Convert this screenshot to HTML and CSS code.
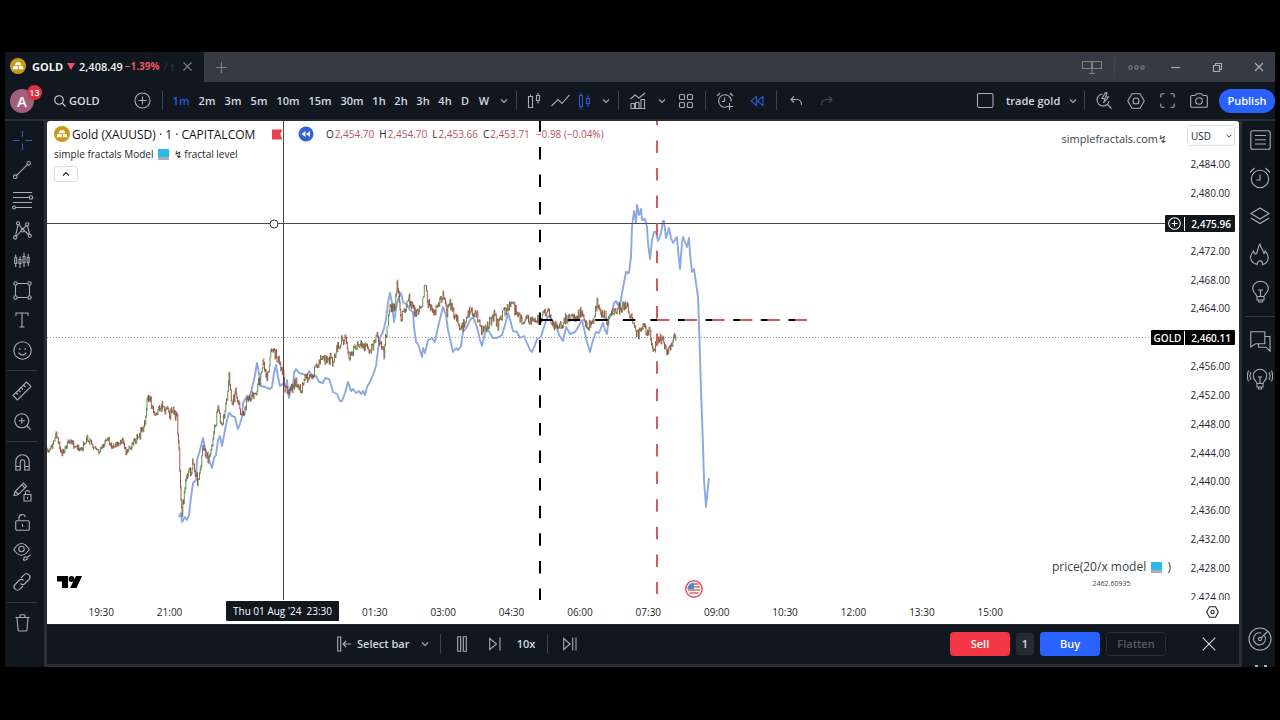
FILE: index.html
```html
<!DOCTYPE html>
<html lang="en">
<head>
<meta charset="utf-8">
<title>GOLD 2,408.49 −1.39%</title>
<link rel="stylesheet" href="styles.css">
</head>
<body>
<svg class="defs" aria-hidden="true">
  <symbol id="chev" viewBox="0 0 10 10"><path d="M2 3.5l3 3 3-3"/></symbol>
  <symbol id="gold" viewBox="0 0 16 16"><circle cx="8" cy="8" r="8" fill="#c99a16" stroke="none"/><path d="M6 4.2h4l1.2 3H4.800zM3.600 8h3.800l1.100 3.200H2.500zM8.800 8h3.700l1.100 3.200H9.200z" fill="#fff" stroke="none"/></symbol>
</svg>
<div class="app">
  <header class="titlebar">
    <div class="tab">
      <svg class="coin"><use href="#gold"/></svg>
      <span class="tab-name">GOLD</span>
      <svg width="8" height="7" viewBox="0 0 8 7"><path d="M0 0h8L4 7z" fill="#f0525e"/></svg>
      <span class="tab-price">2,408.49</span>
      <span class="tab-change">−1.39%</span>
      <span class="tab-fade">/ t</span>
      <button class="ico w16 dim" aria-label="Close tab"><svg width="9" height="9"><path d="M.5.5l8 8M8.500.5l-8 8"/></svg></button>
    </div>
    <button class="ico w34 dim" aria-label="New tab"><svg width="11" height="11"><path d="M5.500 0v11M0 5.500h11"/></svg></button>
    <div class="window-controls">
      <button class="ico w36 dim" aria-label="Layouts"><svg width="20" height="13"><path d="M.5.5h9v7h-9zM10.500.5h9v7h-9zM10 8v4M7 12.500h6"/></svg></button>
      <i class="sep w8"></i>
      <button class="ico w36 dim" aria-label="More"><svg width="17" height="5"><circle cx="2.500" cy="2.500" r="1.700"/><circle cx="8.500" cy="2.500" r="1.700"/><circle cx="14.500" cy="2.500" r="1.700"/></svg></button>
      <button class="ico w42" aria-label="Minimize"><svg width="9" height="3"><path d="M0 1.500h9"/></svg></button>
      <button class="ico w42" aria-label="Restore"><svg width="9" height="9"><path d="M.5 2.500h6v6h-6zM2.500 2.500v-2h6v6h-2"/></svg></button>
      <button class="ico w42" aria-label="Close"><svg width="10" height="10"><path d="M1 1l8 8M9 1l-8 8"/></svg></button>
    </div>
  </header>

  <nav class="toolbar">
    <button class="avatar" aria-label="Account">A<span class="badge">13</span></button>
    <button class="symbol-search"><svg width="12" height="12"><circle cx="5" cy="5" r="4.300"/><path d="M8.200 8.200l3.300 3.300"/></svg>GOLD</button>
    <button class="ico w28" aria-label="Compare"><svg width="17" height="17"><circle cx="8.500" cy="8.500" r="7.500"/><path d="M8.500 4.500v8M4.500 8.500h8"/></svg></button>
    <i class="sep w12"></i>
    <button class="tf w26 on">1m</button><button class="tf w26">2m</button><button class="tf w26">3m</button><button class="tf w26">5m</button><button class="tf w32">10m</button><button class="tf w32">15m</button><button class="tf w32">30m</button><button class="tf w22">1h</button><button class="tf w22">2h</button><button class="tf w22">3h</button><button class="tf w22">4h</button><button class="tf w18">D</button><button class="tf w20">W</button>
    <button class="ico w20" aria-label="More intervals"><svg width="10" height="10"><use href="#chev"/></svg></button>
    <i class="sep w4"></i>
    <button class="ico w32" aria-label="Bars"><svg width="14" height="18"><path d="M1.500 4.500h4v11h-4zM3.500 2.500v2M9.500 3.500h3v5h-3zM11 1v2.500M11 9v2.500"/></svg></button>
    <button class="ico w20" aria-label="Line"><svg width="19" height="13"><path d="M.5 12L7 5.500l4 4L18.500.8"/></svg></button>
    <button class="ico w28 blue" aria-label="Candles"><svg width="13" height="18"><path d="M1.500 3.500h3v11h-3zM3 1v2M3 15v2.500M8.500 6.500h3v5h-3zM10 3.500v3M10 12v3"/></svg></button>
    <button class="ico w16" aria-label="More chart types"><svg width="10" height="10"><use href="#chev"/></svg></button>
    <i class="sep w8"></i>
    <button class="ico w32" aria-label="Indicators"><svg width="16" height="17"><path d="M.5 7L5 3l4 3 6-5M1 16.500v-5h3.500v5M5.500 16.500v-6H9v6M11 16.500v-9h3.500v9M.5 16.500h15"/></svg></button>
    <button class="ico w16" aria-label="Templates"><svg width="10" height="10"><use href="#chev"/></svg></button>
    <button class="ico w32" aria-label="Layout"><svg width="14" height="14"><rect x=".5" y=".5" width="5" height="5" rx="1"/><rect x="8.500" y=".5" width="5" height="5" rx="1"/><rect x=".5" y="8.500" width="5" height="5" rx="1"/><rect x="8.500" y="8.500" width="5" height="5" rx="1"/></svg></button>
    <i class="sep w6"></i>
    <button class="ico w34" aria-label="Alert"><svg width="18" height="18"><path d="M10 15.200A6.300 6.300 0 1 1 15.200 9.500M8.500 5.500v4H6M1 4l3-3M14 1l3 3M13.500 11v7M10 14.500h7"/></svg></button>
    <button class="ico w30 blue" aria-label="Replay"><svg width="14" height="12"><path d="M6.500 1.500v9L1 6zM13 1.500v9L7.500 6z"/></svg></button>
    <i class="sep w8"></i>
    <button class="ico w32" aria-label="Undo"><svg width="12" height="10"><path d="M4 .5l-3 3 3 3M1 3.500h6c3 0 4.500 2 4.500 5.500"/></svg></button>
    <button class="ico w30 faint" aria-label="Redo"><svg width="12" height="10"><path d="M8 .5l3 3-3 3M11 3.500H5C2 3.500.5 5.500.5 9"/></svg></button>
    <div class="toolbar-right">
      <button class="ico w32" aria-label="Select layout"><svg width="17" height="15"><rect x=".5" y=".5" width="15.500" height="14" rx="1.500"/></svg></button>
      <button class="layout-name">trade gold</button>
      <button class="ico w18" aria-label="Manage layouts"><svg width="10" height="10"><use href="#chev"/></svg></button>
      <i class="sep w4"></i>
      <button class="ico w36" aria-label="Quick search"><svg width="16" height="17"><path d="M6.500 2A6 6 0 1 0 13 9M11 12l4.500 4.500M9.500.5L6 6.500h3L7.500 11l5-6h-3L11 .8z"/></svg></button>
      <button class="ico w28" aria-label="Settings"><svg width="18" height="16"><path d="M5 .8h8L17.300 8 13 15.200H5L.7 8z"/><circle cx="9" cy="8" r="3"/></svg></button>
      <button class="ico w34" aria-label="Fullscreen"><svg width="15" height="15"><path d="M.8 4.500V2a1.200 1.200 0 0 1 1.200-1.200h2.500M10.500.8H13A1.200 1.200 0 0 1 14.200 2v2.500M14.200 10.500V13A1.200 1.200 0 0 1 13 14.200h-2.500M4.500 14.200H2A1.200 1.200 0 0 1 .8 13v-2.500"/></svg></button>
      <button class="ico w30" aria-label="Snapshot"><svg width="18" height="15"><path d="M2 2.500h3L6.500.7h5L13 2.500h3A1.300 1.300 0 0 1 17.300 4v9a1.300 1.300 0 0 1-1.300 1.300H2A1.300 1.300 0 0 1 .7 13V4A1.300 1.300 0 0 1 2 2.500z"/><circle cx="9" cy="8" r="3.300"/></svg></button>
      <button class="publish">Publish</button>
    </div>
  </nav>

  <div class="body">
    <aside class="tools">
      <button class="ico blue" aria-label="Cross"><svg width="19" height="19"><path d="M9.500 0v6.500M9.500 12.500V19M0 9.500h6.500M12.500 9.500H19"/></svg></button>
      <button class="ico" aria-label="Trend line"><svg width="18" height="18"><circle cx="2.300" cy="15.700" r="1.800"/><circle cx="15.700" cy="2.300" r="1.800"/><path d="M3.600 14.400L14.400 3.600"/></svg></button>
      <button class="ico" aria-label="Fibonacci"><svg width="21" height="18"><path d="M1 1.500h19M1 6.500h16.500M1 11.500h19M4 16.500h16"/><circle cx="19" cy="6.500" r="1.700"/><circle cx="2" cy="16.500" r="1.500"/></svg></button>
      <button class="ico" aria-label="Patterns"><svg width="19" height="19"><path d="M2.500 15L5 4M6 3.500l3.500 5 4-4M14.500 5l2 8M3.500 15L8 10M11 9.500l4.500 4"/><circle cx="5" cy="2.300" r="1.600"/><circle cx="14.200" cy="3.300" r="1.600"/><circle cx="9.500" cy="9.500" r="1.500"/><circle cx="2.200" cy="16.500" r="1.600"/><circle cx="16.700" cy="14.700" r="1.600"/></svg></button>
      <button class="ico" aria-label="Forecast"><svg width="16" height="16"><path d="M.7 5.500h2v6h-2zM1.700 2.500v3M1.700 12v3M5 7.500h2v4H5zM6 4.500v3M6 12v4M9 4.500h2v6H9zM10 .5v4M10 11v4M13.200 5.500h2v5h-2zM14.200 2v3M14.200 11v3"/></svg></button>
      <button class="ico" aria-label="Shapes"><svg width="19" height="19"><path d="M4.300 2.500h10.400M4.300 16.500h10.400M2.500 4.300v10.400M16.500 4.300v10.400"/><circle cx="2.500" cy="2.500" r="1.700"/><circle cx="16.500" cy="2.500" r="1.700"/><circle cx="2.500" cy="16.500" r="1.700"/><circle cx="16.500" cy="16.500" r="1.700"/></svg></button>
      <button class="ico" aria-label="Text"><svg width="14" height="16"><path d="M1 4V1h12v3M7 1v14M4.500 15h5"/></svg></button>
      <button class="ico" aria-label="Icons"><svg width="19" height="19"><circle cx="9.500" cy="9.500" r="8.700"/><path d="M6.800 7v2M12.200 7v2M5.800 11.500a4 4 0 0 0 7.400 0"/></svg></button>
      <i class="rule"></i>
      <button class="ico" aria-label="Measure"><svg width="20" height="20"><path d="M1 14.500L14.500 1 19 5.500 5.500 19zM4 11.500l2 2M6.500 9l2 2M9 6.500l2 2M11.500 4l2 2"/></svg></button>
      <button class="ico" aria-label="Zoom in"><svg width="17" height="17"><circle cx="7.800" cy="7.800" r="7"/><path d="M7.800 4.800v6M4.800 7.800h6M13 13l3.500 3.500"/></svg></button>
      <i class="rule"></i>
      <button class="ico" aria-label="Magnet"><svg width="15" height="17"><path d="M.8 16V7.500a6.700 6.700 0 0 1 13.400 0V16H9.700V8a2.200 2.200 0 0 0-4.400 0v8zM.8 12.500h4.500M9.700 12.500h4.500"/></svg></button>
      <button class="ico" aria-label="Stay in drawing mode"><svg width="19" height="20"><path d="M1 13.500l1-4L10.500 1l3.200 3.200L5 12.800zM8.800 2.700L12 6M2.500 9.500l3 3M11 12.500h7V19h-7zM12.500 12.500v-2a2 2 0 0 1 4 0M14.500 15v2"/></svg></button>
      <button class="ico" aria-label="Lock"><svg width="15" height="17"><rect x=".7" y="6.700" width="13.600" height="9.600" rx="1.200"/><path d="M4 6.500V4a3.200 3.200 0 0 1 6.300-1M7.500 10v3"/></svg></button>
      <button class="ico" aria-label="Hide drawings"><svg width="19" height="20"><path d="M.8 7.500Q8.500-4.500 16.200 7.500 8.500 19 .8 7.500z"/><circle cx="8.500" cy="7" r="2.700"/><path d="M10.500 18c0-3 2.500-4 3.500-2.500s-1 3-3.500 2.500zM14 15.500l3.500-2.500"/></svg></button>
      <button class="ico" aria-label="Link"><svg width="18" height="18"><path d="M8 5l3-3a3.200 3.200 0 0 1 5 0 3.200 3.200 0 0 1 0 4.500L12 10.500a3.200 3.200 0 0 1-4.500 0M10 13l-3 3a3.200 3.200 0 0 1-5 0 3.200 3.200 0 0 1 0-4.500L6 7.500a3.200 3.200 0 0 1 4.500 0"/></svg></button>
      <i class="rule"></i>
      <button class="ico" aria-label="Delete"><svg width="15" height="18"><path d="M.5 3.500h14M5 3.500v-2A1 1 0 0 1 6 .8h3a1 1 0 0 1 1 .7v2M2 3.500l1 12.300a1.400 1.400 0 0 0 1.400 1.200h6.200a1.400 1.400 0 0 0 1.400-1.200L13 3.500"/></svg></button>
    </aside>

    <main class="center">
      <section class="chart">
        <div class="pane">
          <svg class="plot" viewBox="47 121 1139 479" preserveAspectRatio="none">
            <path class="last-price" d="M47 337.500H1186"/>
            <g class="model">
              <polyline points="179,517 181,513 182,522 185,517 187,520 189,515 191,497 193,483 196,480 197,460 200,450 203,438 205,448 208,457 212,468 214,458 216,455 218,440 220,436 222,446 225,430 227,420 229,413 232,416 235,417 237,426 238,429 240,424 242,417 243,403 247,396 249,400 252,388 255,375 257,363 259,373 261,386 265,387 270,389 272,387 274,373 276,365 278,377 280,386 284,383 286,387 287,380 289,398 291,388 293,386 294,373 296,369 299,373 303,374 307,376 309,371 313,377 316,376 319,382 323,383 325,378 329,379 331,385 333,392 337,394 340,401 342,401 345,393 348,382 351,391 353,389 356,393 359,391 361,394 363,391 365,395 367,387 370,382 373,375 376,366 378,350 380,338 383,332 386,320 388,303 390,293 392,303 394,322 397,303 399,297 401,293 403,302 407,305 410,310 413,312 414,327 416,342 418,344 422,357 423,348 425,353 428,340 432,338 435,342 438,327 441,315 443,307 446,315 448,330 451,343 453,352 456,348 458,350 461,346 463,332 467,327 470,320 473,317 477,327 480,340 482,346 485,333 488,330 493,338 497,338 502,335 505,325 508,313 511,323 513,331 517,332 520,338 524,336 527,343 530,350 532,352 535,345 537,339 541,337 543,330 547,318 549,316 553,322 557,328 559,335 563,341 566,327 570,334 575,332 578,327 582,320 585,333 587,342 590,352 593,340 596,332 599,333 603,323 605,330 607,334 609,317 612,313 614,303 616,301 618,305 620,305 622,293 624,283 626,272 629,273 631,257 632,227 634,211 636,223 637,205 639,215 641,209 642,220 645,219 647,227 648,243 650,259 652,240 654,232 656,232 658,241 661,233 663,221 664,221 666,238 668,232 669,228 671,238 673,243 677,237 678,250 680,269 682,243 683,237 687,247 689,238 690,253 692,272 694,269 696,283 698,297 699,323 701,390 703,445 704,480 706,507 708,487 709,478"/>
            </g>
            <g id="candles"></g>
            <path class="cross" d="M47 223.500H1165M283.500 121V600"/>
            <path class="dash black" d="M540 119.300V600"/>
            <path class="dash black" d="M540 320H806"/>
            <path class="dash red" d="M657 112.800V594"/>
            <path class="dash red" d="M657 320H807"/>
            <circle cx="274" cy="224" r="4" fill="#fff" stroke="#333"/>
          </svg>
          <div class="legend">
            <div class="legend-main">
              <svg class="coin"><use href="#gold"/></svg>
              <span class="legend-title">Gold (XAUUSD) · 1 · CAPITALCOM</span>
              <svg class="flag" width="10" height="11" viewBox="0 0 10 11"><path d="M0 .5h10v1.500Q7 5 10 9v1.500H0z" fill="#e8434f"/></svg>
              <svg class="rew" width="16" height="16" viewBox="0 0 16 16"><circle cx="8" cy="8" r="7.500" fill="#3160d8"/><path d="M7.500 5v6L3.500 8zM12 5v6L8 8z" fill="#fff"/></svg>
              <span class="ohlc">O<b>2,454.70</b></span><span class="ohlc">H<b>2,454.70</b></span><span class="ohlc">L<b>2,453.66</b></span><span class="ohlc">C<b>2,453.71</b></span><span class="ohlc"><b>−0.98 (−0.04%)</b></span>
            </div>
            <div class="legend-sub">simple fractals Model <i class="laptop"></i> ↯ fractal level</div>
            <button class="collapse" aria-label="Collapse"><svg width="8" height="6"><path d="M1 4.500l3-3 3 3"/></svg></button>
          </div>
          <div class="note note-top">simplefractals.com↯</div>
          <div class="note note-bottom"><span>price(20/x model <i class="laptop"></i> )</span><small>2462.60935</small></div>
          <svg class="tv" viewBox="0 0 25 13"><path d="M0 0h11v12H5V5.500H0zM19 0h6l-5.500 12H13z"/><circle cx="14.500" cy="3" r="2.900"/></svg>
          <svg class="us" viewBox="0 0 18 18"><circle cx="9" cy="9" r="8.200" fill="#fff" stroke="#dc5560" stroke-width="1.500"/><path d="M9 4h4.500M9 7h6M3 10h12M4.500 13h9" stroke="#dc6468" stroke-width="1.600"/><path d="M9 2.500V9H2.500A6.500 6.500 0 0 1 9 2.500z" fill="#4a8fce"/></svg>
        </div>
        <div class="prices">
          <div class="currency"><select aria-label="Currency"><option>USD</option></select><svg width="8" height="8"><use href="#chev"/></svg></div>
          <ul class="price-list"><li>2,484.00</li><li>2,480.00</li><li></li><li>2,472.00</li><li>2,468.00</li><li>2,464.00</li><li></li><li>2,456.00</li><li>2,452.00</li><li>2,448.00</li><li>2,444.00</li><li>2,440.00</li><li>2,436.00</li><li>2,432.00</li><li>2,428.00</li><li>2,424.00</li></ul>
        </div>
        <div class="times">
          <span>19:30</span><span>21:00</span><span></span><span></span><span>01:30</span><span>03:00</span><span>04:30</span><span>06:00</span><span>07:30</span><span>09:00</span><span>10:30</span><span>12:00</span><span>13:30</span><span>15:00</span>
        </div>
        <button class="ico axis-settings" aria-label="Axis settings"><svg width="13" height="12"><path d="M3.500.8h6L12.300 6l-2.800 5.200h-6L.7 6z"/><circle cx="6.500" cy="6" r="1.700"/></svg></button>
        <div class="tag cross-price"><button aria-label="Add at price"><svg width="13" height="13"><circle cx="6.500" cy="6.500" r="5.800"/><path d="M6.500 3.500v6M3.500 6.500h6"/></svg></button><span>2,475.96</span></div>
        <div class="tag last"><em>GOLD</em><span>2,460.11</span></div>
        <div class="tag cross-time"><span>Thu 01 Aug '24</span><span>23:30</span></div>
      </section>

      <section class="replay">
        <button class="select-bar"><svg width="14" height="16"><path d="M.7 1h3v14h-3zM14 8H6M9 5L6 8l3 3"/></svg>Select bar</button>
        <button class="ico w20" aria-label="Select options"><svg width="10" height="10"><use href="#chev"/></svg></button>
        <i class="sep w10"></i>
        <button class="ico w34" aria-label="Pause"><svg width="10" height="16"><path d="M.7.7h3v14.600h-3zM6.300.7h3v14.600h-3z"/></svg></button>
        <button class="ico w32" aria-label="Step"><svg width="12" height="14"><path d="M.7 1.500L7.500 7 .7 12.500zM11 .5v13"/></svg></button>
        <button class="tf w30">10x</button>
        <i class="sep w12"></i>
        <button class="ico w34" aria-label="To realtime"><svg width="14" height="14"><path d="M.7 1.500L7 7 .7 12.500zM9.700.5v13M13 .5v13"/></svg></button>
        <div class="trade">
          <button class="order sell">Sell</button><input class="qty" aria-label="Quantity" value="1"><button class="order buy">Buy</button><button class="order flatten">Flatten</button>
          <button class="ico close" aria-label="Close replay"><svg width="14" height="14"><path d="M.7.7l12.600 12.600M13.300.7L.7 13.300"/></svg></button>
        </div>
      </section>
    </main>

    <aside class="widgets">
      <button class="ico" aria-label="Watchlist"><svg width="21" height="20"><rect x=".8" y=".8" width="19.400" height="18.400" rx="2"/><path d="M5 5.500h11M5 9.800h11M5 14h11"/></svg></button>
      <button class="ico" aria-label="Alerts"><svg width="22" height="22"><circle cx="11" cy="12" r="8.700"/><path d="M11 7.500V13H7.500M1 5.500L5.500 1M16.500 1L21 5.500"/></svg></button>
      <button class="ico" aria-label="Object tree"><svg width="20" height="18"><path d="M10 1l9 5.500-9 5.500-9-5.500zM1 11l9 5.500 9-5.500"/></svg></button>
      <button class="ico" aria-label="Hotlists"><svg width="20" height="23"><path d="M7 21.500C-1 19-.5 12.500 3.500 8c.5 2 1.500 3 2.500 3 2.500-2.500 1-6.500 4-10 .5 4.500 3.500 6 4 9.500 1-.5 1.300-1.500 1-3 5 6 4 12.500-2.500 14 .3-2-.7-3.500-2.500-4-2 1-3 2.500-3 4z"/></svg></button>
      <button class="ico" aria-label="Ideas"><svg width="17" height="22"><path d="M5 15.500c0-2-4.300-3.500-4.300-8a7.800 7.300 0 0 1 15.600 0c0 4.500-4.300 6-4.300 8zM5 15.500V19h7v-3.500M6.500 19v2h4v-2M8.500 15V9M6 9h5"/></svg></button>
      <i class="rule"></i>
      <button class="ico" aria-label="Chats"><svg width="21" height="21"><path d="M.8.8h14v12H5.500L.8 16zM15 5.500h5v14.700l-4-4H8.500v-3"/></svg></button>
      <button class="ico" aria-label="Streams"><svg width="26" height="22"><path d="M10 15.500c0-2-3.800-3.500-3.800-7.500a6.800 6.800 0 0 1 13.600 0c0 4-3.800 5.500-3.800 7.500zM10 15.500V19h6v-3.500M11.500 19v2h3v-2M13 15V9M11 9h4M4 4Q2 8 4 12M1.500 2.500Q-.7 8 1.500 13.500M22 4q2 4 0 8M24.500 2.500q2.200 5.500 0 11"/></svg></button>
      <button class="ico radar" aria-label="Screener"><svg width="24" height="24"><circle cx="12" cy="12" r="11"/><path d="M16.500 8.500A6 6 0 1 1 13 6"/><circle cx="12" cy="12" r="1.600"/><path d="M13 11l6.500-6.500"/></svg></button>
      <svg class="stub" viewBox="0 0 14 2"><path d="M1 1h3M10 1h3"/></svg>
    </aside>
  </div>
</div>
<script src="chart.js"></script>
</body>
</html>
```
FILE: styles.css
```css
* { box-sizing: border-box; }
body { margin: 0; height: 100vh; padding: 52px 5px 53px; background: #000; overflow: hidden; font-family: "Open Sans", "Noto Sans", sans-serif; font-size: 11px; color: #d5d9e0; }
button, input, select { font: inherit; color: inherit; background: none; border: 0; padding: 0; margin: 0; }
svg { flex: none; }
.defs { position: absolute; width: 0; height: 0; }
.app { height: 100%; display: flex; flex-direction: column; background: #10171f; overflow: hidden; }

.ico { display: flex; align-items: center; justify-content: center; color: #a9adb5; }
.ico svg, .symbol-search svg, .select-bar svg, .collapse svg, .currency svg, .cross-price svg { fill: none; stroke: currentColor; stroke-width: 1.1; overflow: visible; }
.blue { color: #3157d8; }
.dim { color: #7c8087; }
.faint { color: #4a4e55; }
.sep { display: flex; justify-content: center; flex: none; height: 19px; }
.sep::before { content: ""; width: 1px; background: #41464e; }
.w4 { width: 4px; } .w6 { width: 6px; } .w8 { width: 8px; } .w10 { width: 10px; } .w12 { width: 12px; }
.w16 { width: 16px; } .w18 { width: 18px; } .w20 { width: 20px; } .w22 { width: 22px; } .w24 { width: 24px; }
.w26 { width: 26px; } .w28 { width: 28px; } .w30 { width: 30px; } .w32 { width: 32px; } .w34 { width: 34px; }
.w36 { width: 36px; } .w42 { width: 42px; }

.titlebar { height: 30px; flex: none; display: flex; align-items: stretch; background: #363b43; }
.tab { width: 199px; padding: 0 9px 2px 5px; display: flex; align-items: center; gap: 4px; background: #10171f; font-weight: 600; white-space: nowrap; color: #f0f1f3; }
.coin { width: 16px; height: 16px; }
.tab-name { font-weight: 700; padding-left: 2px; }
.tab-price { font-size: 11px; }
.tab-change { color: #f0525e; font-size: 10px; font-weight: 700; margin-left: -2px; }
.tab-fade { color: #363b43; font-weight: 400; flex: 1; min-width: 0; }
.window-controls { margin-left: auto; display: flex; align-items: center; margin-right: -5px; }

.toolbar { height: 37px; flex: none; display: flex; align-items: center; }
.toolbar .ico { flex: none; height: 30px; }
.avatar { width: 24px; height: 24px; margin: 0 10px 0 5px; border-radius: 50%; background: #a0607c; color: #fff; font-size: 15px; font-weight: 600; position: relative; flex: none; line-height: 24px; }
.badge { position: absolute; left: 17px; top: -4px; width: 15px; height: 15px; border-radius: 8px; background: #e0303f; font-size: 9px; line-height: 15px; }
.symbol-search { width: 84px; padding-left: 10px; display: flex; align-items: center; gap: 3px; font-weight: 600; flex: none; }
.tf { flex: none; text-align: center; font-weight: 600; height: 30px; }
.tf.on { color: #3157d8; }
.toolbar-right { margin-left: auto; display: flex; align-items: center; }
.layout-name { width: 63px; padding-left: 5px; text-align: left; font-weight: 600; white-space: nowrap; }
.publish { width: 56px; height: 24px; margin-left: 5px; border-radius: 12px; background: #2962ff; color: #fff; font-weight: 600; }

.body { flex: 1; min-height: 0; display: flex; gap: 3px; padding-top: 2px; background: #2a2e35; }
.tools { width: 39px; padding: 4px 5px 0 0; background: #10171f; overflow: hidden; }
.tools .ico { width: 34px; height: 30px; }
.rule { display: flex; align-items: center; height: 11px; padding-left: 2px; }
.rule::before { content: ""; width: 30px; height: 1px; background: #353a42; }
.widgets { width: 33px; padding-left: 1px; display: flex; flex-direction: column; background: #10171f; overflow: hidden; }
.widgets .ico { width: 34px; height: 38px; flex: none; }
.widgets .radar { margin-top: auto; }
.stub { height: 2px; margin: 7px 0 0 11px; width: 14px; stroke: #a9adb5; stroke-width: 2; }

.center { flex: 1; min-width: 0; display: flex; flex-direction: column; }
.chart { position: relative; flex: 1; min-height: 0; display: grid; grid-template: minmax(0, 1fr) 24px / minmax(0, 1fr) 53px; background: #fff; color: #22252b; border-radius: 3px 3px 0 0; font-size: 10px; }
.pane { position: relative; min-height: 0; }
.plot { display: block; width: 100%; height: 100%; fill: none; }
.last-price { stroke: #999; stroke-dasharray: 1 2; }
.cross { stroke: #45484e; }
.model polyline { stroke: #8ca8e3; stroke-width: 1.9; stroke-linejoin: round; }
.dash { stroke-width: 2; stroke-dasharray: 12.500 15.100; }
.black { stroke: #000; }
.red { stroke: #cf5f5f; }
.candle-up { stroke: #4e8244; stroke-width: .9; }
.candle-down { stroke: #9c4034; stroke-width: .9; }

.legend { position: absolute; left: 7px; top: 4px; display: flex; flex-direction: column; align-items: flex-start; }
.legend-main { display: flex; align-items: center; height: 18px; white-space: nowrap; }
.legend-title { width: 202px; padding-left: 2px; font-size: 12px; font-weight: 500; color: #111; }
.flag { margin-right: 16px; }
.rew { margin-right: 12px; }
.ohlc { margin-right: 5px; font-weight: 500; }
.ohlc b { font-weight: 500; padding-left: 1px; color: #b7535c; }
.legend-sub { height: 22px; line-height: 22px; font-weight: 500; }
.laptop { display: inline-block; width: 11px; height: 11px; margin: 0 2px; background: linear-gradient(#2cb9ee 75%, #a8aeb4 75%); vertical-align: -2px; }
.collapse { width: 24px; height: 16px; margin-top: 1px; border: 1px solid #dcdee2; border-radius: 3px; display: flex; align-items: center; justify-content: center; }
.note { position: absolute; color: #3c3f45; white-space: nowrap; }
.note-top { right: 19px; top: 10px; font-size: 11px; font-weight: 500; }
.note-bottom { right: 15px; bottom: 8px; display: flex; flex-direction: column; align-items: center; font-size: 12px; }
.note small { font-size: 7px; line-height: 17px; }
.tv { position: absolute; left: 10px; bottom: 11px; width: 25px; height: 13px; }
.us { position: absolute; left: 56%; bottom: 2px; width: 18px; height: 18px; }

.prices { display: flex; flex-direction: column; min-height: 0; overflow: hidden; }
.currency { width: 48px; height: 21px; margin: 4px 0 4px 1px; padding-left: 3px; border: 1px solid #dcdee2; border-radius: 3px; flex: none; display: grid; align-items: center; }
.currency select { appearance: none; width: 100%; grid-area: 1 / 1; }
.currency svg { grid-area: 1 / 1; justify-self: end; margin-right: 1px; pointer-events: none; }
.price-list { list-style: none; flex: 1; margin: 0 9px -11px 0; padding: 0; display: grid; grid-template-rows: repeat(16, 1fr); align-items: center; text-align: right; }
.times { display: grid; grid-template-columns: repeat(14, 6.113%); padding-left: 20px; align-items: center; text-align: center; }
.axis-settings { color: #22252b; }
.tag { position: absolute; display: flex; align-items: center; height: 17px; background: #10171f; color: #fff; font-weight: 600; border-radius: 1px; white-space: nowrap; }
.tag button { display: flex; align-items: center; justify-content: center; width: 19px; height: 17px; }
.cross-price, .last { right: 4px; }
.cross-price { top: 94px; }
.last { top: 209px; height: 15px; background: #000; }
.cross-price span, .last span { width: 51px; padding-right: 4px; text-align: right; border-left: 1px solid #fff; }
.last em { width: 33px; text-align: center; font-style: normal; }
.cross-time { left: 179px; bottom: 3px; height: 20px; padding: 0 7px; width: 113px; justify-content: space-between; font-weight: 500; }

.replay { height: 40px; flex: none; display: flex; align-items: center; margin-bottom: 3px; padding: 0 0 2px 290px; background: #10171f; border-top: 1px solid #23282f; }
.replay .ico { height: 30px; flex: none; }
.select-bar { width: 78px; display: flex; align-items: center; gap: 6px; white-space: nowrap; font-weight: 600; flex: none; }
.select-bar svg { color: #a9adb5; }
.trade { margin-left: auto; display: flex; align-items: center; gap: 6px; padding-right: 15px; }
.order { width: 60px; height: 24px; border-radius: 4px; color: #fff; font-weight: 600; }
.sell { background: #f23645; }
.buy { background: #2962ff; }
.flatten { border: 1px solid #2c3138; color: #565b63; }
.qty { width: 18px; height: 22px; background: #262b33; border-radius: 3px; text-align: center; font-weight: 600; }
.trade .close { width: 30px; margin-left: 22px; color: #d5d9e0; }
```
FILE: chart.js
```js
// One-minute price turning points, in plot coordinates.
const turns = [47,452,52,447,56,435,62,453,70,439,75,448,82,448,87,438,92,445,99,452,107,439,113,447,123,440,126,453,133,443,140,435,145,423,147,403,149,397,155,415,162,406,170,415,173,408,177,420,179,447,181,497,182,512,186,477,192,468,193,462,198,483,203,448,208,458,213,440,218,408,222,427,227,400,229,378,232,403,236,392,242,417,248,398,257,390,263,363,267,377,272,347,277,357,283,375,285,390,290,390,296,383,301,392,305,378,313,375,321,357,325,361,331,358,333,363,337,348,342,340,345,338,349,355,360,343,370,353,377,337,380,345,384,353,387,327,390,307,395,310,397,283,401,317,409,300,415,313,422,307,425,285,428,303,433,315,439,303,443,293,447,313,450,302,455,317,462,328,470,310,477,315,482,333,488,325,494,315,498,325,505,310,511,303,517,312,522,322,527,318,533,323,540,317,548,313,553,323,558,327,567,318,573,320,581,313,587,327,594,318,597,303,600,312,603,313,607,320,612,310,620,308,626,305,632,318,637,335,643,328,650,332,654,353,658,338,663,340,668,353,672,342,676,335];
let seed = 11;
const rand = () => (seed = (seed * 16807) % 2147483647) / 2147483647 - 0.5;
const up = [], down = [];
let prev = turns[1];
for (let i = 0; i + 3 < turns.length; i += 2) {
  const [x0, y0, x1, y1] = turns.slice(i, i + 4);
  const amp = x0 < 140 ? 5 : 10;
  for (let x = x0; x < x1; x += 0.75) {
    const y = y0 + (y1 - y0) * (x - x0) / (x1 - x0) + rand() * amp;
    const wick = Math.abs(rand()) * 4;
    const lo = Math.max(prev, y) + wick, hi = Math.min(prev, y) - wick;
    (y < prev ? up : down).push(`M${x.toFixed(1)} ${lo.toFixed(1)}V${hi.toFixed(1)}`);
    prev = y;
  }
}
document.getElementById("candles").innerHTML =
  `<path class="candle-up" d="${up.join("")}"/><path class="candle-down" d="${down.join("")}"/>`;
```
